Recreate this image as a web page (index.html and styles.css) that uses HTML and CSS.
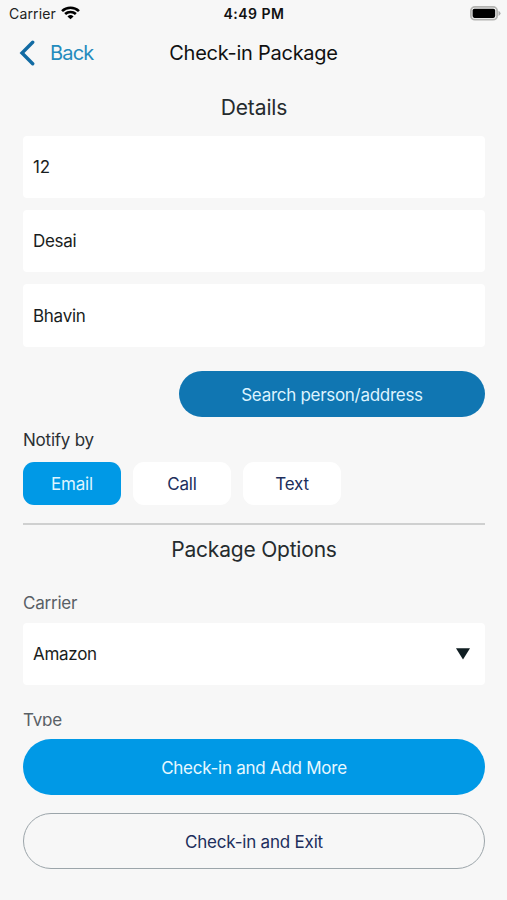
FILE: index.html
```html
<!DOCTYPE html>
<html lang="en">
<head>
<meta charset="utf-8">
<title>Check-in Package</title>
<link rel="stylesheet" href="styles.css">
</head>
<body>
<div class="screen">
  <div class="status">
    <div class="status-left"><span class="network">Carrier</span>
      <svg class="wifi" width="19" height="14" viewBox="0 0 18 14" preserveAspectRatio="none" fill="none" stroke="#000" stroke-width="2.5"><path d="M1 5.1a11.4 11.4 0 0 1 16 0M3.9 8a7.4 7.4 0 0 1 10.2 0"/><path d="M9 13.3 6.1 10.4a4.2 4.2 0 0 1 5.8 0Z" fill="#000" stroke="none"/></svg>
    </div>
    <span class="time">4:49 PM</span>
    <svg class="battery" width="31" height="15" viewBox="0 0 31 15"><rect x=".9" y=".9" width="26.2" height="12.8" rx="4" fill="#f7f7f7" stroke="#b3b3b1" stroke-width="1.8"/><rect x="2.6" y="2.7" width="22.6" height="9.2" rx="1.8"/><path d="M28.5 4.7q2 1 2 2.6t-2 2.6z" fill="#aaa"/></svg>
  </div>
  <header class="nav">
    <a class="back"><svg width="16" height="26" viewBox="0 0 16 26" fill="none" stroke="#126ba3" stroke-width="3.4" stroke-linecap="round" stroke-linejoin="miter"><path d="M13.7 2.3 3 13l10.7 10.7"/></svg><span>Back</span></a>
    <h1 class="title">Check-in Package</h1>
  </header>
  <main class="form">
    <h2 class="section">Details</h2>
    <div class="fields">
      <div class="field">12</div>
      <div class="field">Desai</div>
      <div class="field last">Bhavin</div>
    </div>
    <button class="search">Search person/address</button>
    <div class="notify">Notify by</div>
    <div class="chips">
      <button class="chip chip-on">Email</button>
      <button class="chip">Call</button>
      <button class="chip">Text</button>
    </div>
    <hr class="rule">
    <h2 class="section options">Package Options</h2>
    <div class="label">Carrier</div>
    <div class="field select"><span>Amazon</span><svg width="14" height="12" viewBox="0 0 14 12"><path d="M0 .2h14L7 11.6z" fill="#101e22"/></svg></div>
    <div class="label type">Type</div>
  </main>
  <footer class="actions">
    <button class="action primary">Check-in and Add More</button>
    <button class="action outline">Check-in and Exit</button>
  </footer>
</div>
</body>
</html>
```
FILE: styles.css
```css
* { box-sizing: border-box; }
body { margin: 0; background: #f7f7f7; font-family: Inter, "Liberation Sans", sans-serif; color: #191d20; }
button { border: 0; padding: 0; font: inherit; }
h1, h2 { margin: 0; font-weight: 400; }
.screen { width: 507px; height: 900px; display: flex; flex-direction: column; overflow: hidden; }
.status { height: 28px; padding: 0 6px 0 9px; display: grid; grid-template-columns: 1fr auto 1fr; align-items: center; }
.status-left { display: flex; align-items: center; gap: 5px; }
.network { font-size: 14px; line-height: 28px; letter-spacing: .15px; color: #222; }
.wifi { margin-top: -2px; }
.time { font-size: 14px; font-weight: 600; letter-spacing: .5px; margin-right: 2px; transform: translateY(-1px); color: #111; }
.battery { justify-self: end; margin-top: -1px; }
.nav { height: 50px; padding: 0 20px; display: grid; grid-template-columns: 1fr auto 1fr; align-items: center; }
.back { display: flex; align-items: center; gap: 14px; color: #248bbd; font-size: 20px; letter-spacing: -.8px; }
.back svg { margin-left: -1px; margin-right: 1px; }
.title { font-size: 20px; letter-spacing: -.26px; color: #111; }
.form { height: 648px; padding: 15px 22px 0 23px; overflow: hidden; }
.section { font-size: 21px; line-height: 30px; letter-spacing: -.1px; text-align: center; color: #252b2e; }
.fields { margin-top: 13px; display: flex; flex-direction: column; gap: 12px; }
.field { height: 62px; padding: 0 10px; border-radius: 4px; background: #fff; display: flex; align-items: center; font-size: 17px; letter-spacing: -.28px; }
.last { height: 63px; padding-top: 1px; }
.search { display: block; width: 306px; height: 46px; margin: 24px 0 0 auto; padding-top: 1px; border-radius: 23px; background: #1076b2; color: #dcf3ff; font-size: 17px; letter-spacing: -.29px; }
.notify { margin-top: 11px; height: 24px; line-height: 24px; font-size: 17px; letter-spacing: -.22px; color: #2b3033; }
.chips { display: flex; gap: 12px; margin-top: 10px; }
.chip { width: 98px; height: 43px; padding-top: 1px; border-radius: 11px; background: #fff; color: #202e5c; font-size: 17px; letter-spacing: -.2px; }
.chip-on { background: #0099e6; color: #dff5ff; }
.rule { margin: 18px 0 0; border: 0; height: 2px; background: #cfd0d0; }
.options { margin-top: 10px; letter-spacing: -.2px; }
.label { font-size: 17px; line-height: 24px; letter-spacing: -.22px; color: #596066; margin-top: 26px; }
.select { margin-top: 8px; justify-content: space-between; padding-right: 15px; }
.type { margin-top: 23px; }
.actions { padding: 13px 22px 0 23px; display: flex; flex-direction: column; gap: 18px; }
.action { height: 56px; padding-top: 1px; border-radius: 28px; font-size: 17px; letter-spacing: -.26px; }
.primary { background: #0099e6; color: #e7f8ff; }
.outline { border: 1px solid #9ca5aa; background: transparent; color: #202e5c; letter-spacing: -.2px; }
```
